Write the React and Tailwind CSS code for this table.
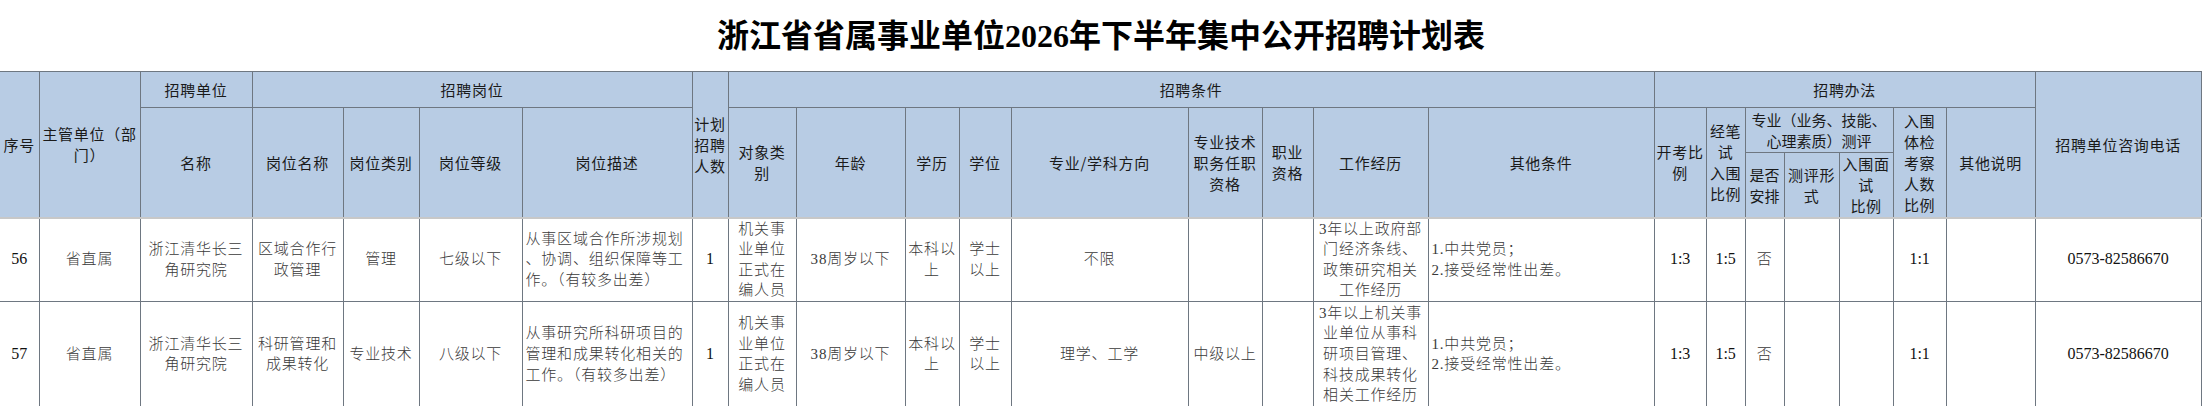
import React from "react";

const cols = [39, 101, 112, 91, 76, 103, 170, 36, 68, 109, 54, 52, 177, 74, 51, 115, 226, 52, 39, 39, 55, 54, 53, 89, 166];

const TH =
  "border border-[#6e7781] bg-[#b8cce4] text-center align-middle font-normal text-[15px] leading-[21px] tracking-[0.7px] text-[#1a1a1a] p-0 whitespace-nowrap [font-family:'Noto_Sans_CJK_SC','Noto_Sans',sans-serif]";
const TD =
  "border border-[#6e7781] align-middle text-[15px] leading-[20.6px] text-[#3a3a3a] font-light p-0 whitespace-nowrap tracking-[0.8px] [font-family:'Liberation_Serif','Noto_Sans_CJK_SC',serif]";
const BAND = " border-b-2 border-b-[#c8c8c8]";

function Lines({ lines }) {
  return (
    <>
      {lines.map((l, i) => (
        <div key={i}>{l}</div>
      ))}
    </>
  );
}

function Th({ lines, className = "", ...rest }) {
  return (
    <th className={TH + " " + className} {...rest}>
      <Lines lines={lines} />
    </th>
  );
}

function Td({ lines = [], align = "center", num = false, className = "" }) {
  const a = align === "left" ? "text-left pl-[3px]" : "text-center";
  const n = num ? " text-[16px] tracking-normal text-[#111]" : "";
  return (
    <td className={TD + " " + a + n + " " + className}>
      <Lines lines={lines} />
    </td>
  );
}

const rows = [
  {
    h: "h-[82px]",
    no: "56",
    job: ["区域合作行", "政管理"],
    type: ["管理"],
    level: ["七级以下"],
    desc: ["从事区域合作所涉规划", "、协调、组织保障等工", "作。（有较多出差）"],
    major: ["不限"],
    tech: [],
    exp: ["3年以上政府部", "门经济条线、", "政策研究相关", "工作经历"],
  },
  {
    h: "h-[106px]",
    no: "57",
    job: ["科研管理和", "成果转化"],
    type: ["专业技术"],
    level: ["八级以下"],
    desc: ["从事研究所科研项目的", "管理和成果转化相关的", "工作。（有较多出差）"],
    major: ["理学、工学"],
    tech: ["中级以上"],
    exp: ["3年以上机关事", "业单位从事科", "研项目管理、", "科技成果转化", "相关工作经历"],
  },
];

export default function App() {
  return (
    <div className="w-[2202px] h-[406px] overflow-hidden bg-white">
      <div className="h-[71px] flex items-center justify-center pt-[1px] text-[32px] font-bold text-black leading-none [font-family:'Liberation_Serif','Noto_Sans_CJK_SC',serif]">
        浙江省省属事业单位2026年下半年集中公开招聘计划表
      </div>
      <table className="table-fixed border-collapse w-[2201px]">
        <colgroup>
          {cols.map((w, i) => (
            <col key={i} style={{ width: w }} />
          ))}
        </colgroup>
        <thead>
          <tr className="h-[36px]">
            <Th rowSpan={3} lines={["序号"]} className={"border-l-0" + BAND} />
            <Th rowSpan={3} lines={["主管单位（部", "门）"]} className={BAND} />
            <Th lines={["招聘单位"]} />
            <Th colSpan={4} lines={["招聘岗位"]} />
            <Th rowSpan={3} lines={["计划", "招聘", "人数"]} className={BAND} />
            <Th colSpan={9} lines={["招聘条件"]} />
            <Th colSpan={7} lines={["招聘办法"]} />
            <Th rowSpan={3} lines={["招聘单位咨询电话"]} className={BAND} />
          </tr>
          <tr className="h-[45px]">
            <Th rowSpan={2} lines={["名称"]} className={BAND} />
            <Th rowSpan={2} lines={["岗位名称"]} className={BAND} />
            <Th rowSpan={2} lines={["岗位类别"]} className={BAND} />
            <Th rowSpan={2} lines={["岗位等级"]} className={BAND} />
            <Th rowSpan={2} lines={["岗位描述"]} className={BAND} />
            <Th rowSpan={2} lines={["对象类", "别"]} className={BAND} />
            <Th rowSpan={2} lines={["年龄"]} className={BAND} />
            <Th rowSpan={2} lines={["学历"]} className={BAND} />
            <Th rowSpan={2} lines={["学位"]} className={BAND} />
            <Th rowSpan={2} lines={["专业/学科方向"]} className={BAND} />
            <Th rowSpan={2} lines={["专业技术", "职务任职", "资格"]} className={BAND} />
            <Th rowSpan={2} lines={["职业", "资格"]} className={BAND} />
            <Th rowSpan={2} lines={["工作经历"]} className={BAND} />
            <Th rowSpan={2} lines={["其他条件"]} className={BAND} />
            <Th rowSpan={2} lines={["开考比", "例"]} className={BAND} />
            <Th rowSpan={2} lines={["经笔", "试", "入围", "比例"]} className={BAND} />
            <Th colSpan={3} lines={["专业（业务、技能、", "心理素质）测评"]} className="tracking-normal" />
            <Th rowSpan={2} lines={["入围", "体检", "考察", "人数", "比例"]} className={BAND} />
            <Th rowSpan={2} lines={["其他说明"]} className={BAND} />
          </tr>
          <tr className="h-[65px]">
            <Th lines={["是否", "安排"]} className={"tracking-normal" + BAND} />
            <Th lines={["测评形", "式"]} className={BAND} />
            <Th lines={["入围面", "试", "比例"]} className={BAND} />
          </tr>
        </thead>
        <tbody>
          {rows.map((r) => (
            <tr key={r.no} className={r.h}>
              <Td lines={[r.no]} num className="border-l-0" />
              <Td lines={["省直属"]} />
              <Td lines={["浙江清华长三", "角研究院"]} />
              <Td lines={r.job} />
              <Td lines={r.type} />
              <Td lines={r.level} />
              <Td lines={r.desc} align="left" />
              <Td lines={["1"]} num />
              <Td lines={["机关事", "业单位", "正式在", "编人员"]} />
              <Td lines={["38周岁以下"]} />
              <Td lines={["本科以", "上"]} />
              <Td lines={["学士", "以上"]} />
              <Td lines={r.major} />
              <Td lines={r.tech} />
              <Td lines={[]} />
              <Td lines={r.exp} />
              <Td lines={["1.中共党员；", "2.接受经常性出差。"]} align="left" />
              <Td lines={["1:3"]} num />
              <Td lines={["1:5"]} num />
              <Td lines={["否"]} />
              <Td lines={[]} />
              <Td lines={[]} />
              <Td lines={["1:1"]} num />
              <Td lines={[]} />
              <Td lines={["0573-82586670"]} num />
            </tr>
          ))}
        </tbody>
      </table>
    </div>
  );
}
